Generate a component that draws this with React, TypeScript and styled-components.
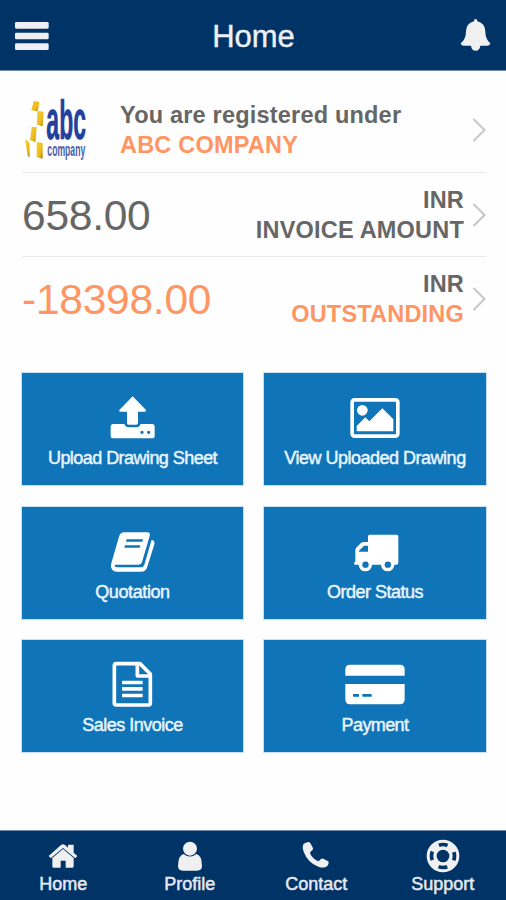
import React from "react";
import styled, { createGlobalStyle } from "styled-components";

const NAVY = "#003366";
const BLUE = "#1074b9";
const ORANGE = "#ff9562";
const GREY = "#666666";

const GlobalStyle = createGlobalStyle`
  * { box-sizing: border-box; }
  body {
    margin: 0;
    background: #fefefe;
    font-family: "Liberation Sans", Arial, sans-serif;
  }
`;

const Screen = styled.div`
  width: 506px;
  height: 900px;
  display: flex;
  flex-direction: column;
  overflow: hidden;
`;

const Header = styled.header`
  height: 71px;
  flex: none;
  display: grid;
  grid-template-columns: 64px 1fr 64px;
  align-items: center;
  background: ${NAVY};
  border-bottom: 1px solid #6f88a5;
`;

const HeaderIcon = styled.svg`
  width: 64px;
  height: 70px;
  display: block;
`;

const Title = styled.h1`
  margin: 4px 0 0 1px;
  text-align: center;
  font-size: 31px;
  line-height: 36px;
  font-weight: 400;
  color: #eef0f8;
  -webkit-text-stroke: 0.4px #eef0f8;
`;

const Main = styled.main`
  flex: 1;
  padding: 17px 20px 0 22px;
`;

const InfoRow = styled.section<{ $last?: boolean }>`
  height: ${(p) => (p.$last ? 82 : 84.5)}px;
  display: flex;
  align-items: center;
  border-bottom: ${(p) => (p.$last ? "0" : "1px solid #e9e9e9")};
`;

const Logo = styled.svg`
  width: 70px;
  height: 68px;
  margin-right: 28px;
  flex: none;
  overflow: visible;
`;

const Lines = styled.div<{ $end?: boolean }>`
  flex: 1;
  padding-top: ${(p) => (p.$end ? 1 : 0)}px;
  text-align: ${(p) => (p.$end ? "right" : "left")};
  font-weight: 700;
  font-size: 23.5px;
  line-height: 30px;
  letter-spacing: 0.2px;
  white-space: nowrap;
`;

const Line = styled.div<{ $accent?: boolean }>`
  color: ${(p) => (p.$accent ? ORANGE : GREY)};
`;

const Amount = styled.div<{ $accent?: boolean }>`
  padding-top: 3px;
  font-size: 42.5px;
  line-height: 48px;
  letter-spacing: -0.25px;
  color: ${(p) => (p.$accent ? ORANGE : GREY)};
`;

const ChevronSvg = styled.svg`
  width: 14px;
  height: 26px;
  margin: 1px 0 0 8px;
  flex: none;
`;

const Tiles = styled.nav`
  margin-top: 34px;
  display: grid;
  grid-template-columns: 221px 222px;
  grid-auto-rows: 112px;
  column-gap: 21px;
  row-gap: 21.5px;
`;

const Tile = styled.a`
  display: flex;
  flex-direction: column;
  align-items: center;
  padding-top: 20px;
  background: ${BLUE};
  box-shadow: 0 0 0 1px #c6e0f2;
`;

const TileIcon = styled.svg`
  width: 68px;
  height: 48px;
  flex: none;
  fill: #fff;
`;

const TileLabel = styled.span<{ $spacing?: number }>`
  margin-top: 7px;
  font-size: 18px;
  line-height: 20px;
  letter-spacing: ${(p) => p.$spacing ?? -0.5}px;
  color: #e9f6ff;
  -webkit-text-stroke: 0.45px #e9f6ff;
  white-space: nowrap;
`;

const Footer = styled.footer`
  height: 70px;
  flex: none;
  display: grid;
  grid-template-columns: repeat(4, 1fr);
  background: ${NAVY};
  border-top: 1px solid #6f88a5;
`;

const Tab = styled.a`
  display: flex;
  flex-direction: column;
  align-items: center;
  padding-top: 7px;
  font-size: 18px;
  line-height: 21px;
  color: #e6e8f2;
  -webkit-text-stroke: 0.5px #e6e8f2;
`;

const TabIcon = styled.svg`
  width: 40px;
  height: 36px;
  flex: none;
  fill: #f0f0f1;
`;

const Chevron = () => (
  <ChevronSvg viewBox="0 0 14 26">
    <path d="M1.5 2L12.5 13L1.5 24" fill="none" stroke="#c6c6c6" strokeWidth="2" />
  </ChevronSvg>
);

const CompanyLogo = () => (
  <Logo viewBox="36 36 210 204">
    <defs>
      <linearGradient id="gold" x1="0" y1="0" x2="1" y2="1">
        <stop offset="0" stopColor="#f8d040" />
        <stop offset="0.65" stopColor="#ecb816" />
        <stop offset="1" stopColor="#a9780f" />
      </linearGradient>
    </defs>
    <g fill="url(#gold)">
      <path d="M71 50L88 54L83 82L64 79Z" />
      <path d="M82 80L101 83L98 127L81 122Z" />
      <path d="M65 128L80 130L76 174L60 168Z" />
      <path d="M45 164L58 176L59 220L53 215Z" />
      <path d="M80 174L98 177L98 224L80 219Z" />
    </g>
    <text
      transform="translate(109 165) scale(0.416 1)"
      fontFamily="Liberation Sans"
      fontWeight="700"
      fontSize="166"
      fill="#23409c"
      stroke="#23409c"
      strokeWidth="2"
    >
      abc
    </text>
    <text
      transform="translate(112 217) scale(0.463 1)"
      fontFamily="Liberation Sans"
      fontWeight="700"
      fontSize="56"
      fill="#4660aa"
    >
      company
    </text>
  </Logo>
);

const UploadIcon = () => (
  <TileIcon viewBox="267 84 204 144">
    <path d="M368 94L408 135Q409 140 404 140H384V175Q384 179 379 179H356Q351 179 351 175V140H331Q326 140 328 135Z" />
    <path
      fillRule="evenodd"
      d="M310 177H343Q347 187 356 187H379Q388 187 392 177H426Q434 177 434 185V212Q434 220 426 220H310Q302 220 302 212V185Q302 177 310 177ZM391 202a5 5 0 1 0 10 0a5 5 0 1 0-10 0ZM411 202a5 5 0 1 0 10 0a5 5 0 1 0-10 0Z"
    />
  </TileIcon>
);

const PictureIcon = () => (
  <TileIcon viewBox="258 84 204 144">
    <rect x="291.5" y="104.5" width="137" height="109" rx="7" fill="none" stroke="#fff" strokeWidth="11" />
    <circle cx="322" cy="136" r="16" />
    <path d="M305 199V183L331 157L343 169L382 130L415 163V199Z" />
  </TileIcon>
);

const BookIcon = () => (
  <TileIcon viewBox="267 81 204 144">
    <path
      fillRule="evenodd"
      d="M340 97H412Q422 98 419 108L396 187Q394 194 386 194H318Q313 194 314 198Q316 202 323 202H392Q400 202 403 194L425 119Q436 123 433 133L411 203Q406 215 394 215H322Q306 215 303 200Q302 194 305 186L327 110Q331 98 340 97ZM350 118L348 125H397L399 118ZM345 136L343 143H389L391 136Z"
    />
  </TileIcon>
);

const TruckIcon = () => (
  <TileIcon viewBox="258 81 204 144">
    <path
      fillRule="evenodd"
      d="M344 104H425Q430 104 430 109V188Q430 194 424 194H418A20 20 0 0 1 378 194H351A20 20 0 0 1 311 194H301Q296 194 297 188Q301 188 301 182V151Q301 146 305 142L317 130Q321 126 327 126H339V109Q339 104 344 104ZM339 137H327L312 152V155H339ZM322 194a9.5 9.5 0 1 0 19 0a9.5 9.5 0 1 0-19 0ZM389 194a9.5 9.5 0 1 0 19 0a9.5 9.5 0 1 0-19 0Z"
    />
  </TileIcon>
);

const InvoiceIcon = () => (
  <TileIcon viewBox="267 81 204 144">
    <g fill="none" stroke="#fff" strokeWidth="11" strokeLinejoin="round">
      <path d="M319 92H390L421 123V210Q421 216 415 216H319Q313 216 313 210V98Q313 92 319 92Z" />
      <path d="M382 92V129H421" />
    </g>
    <rect x="336" y="143" width="62" height="11" rx="2" />
    <rect x="336" y="162" width="62" height="11" rx="2" />
    <rect x="336" y="182" width="62" height="11" rx="2" />
  </TileIcon>
);

const CardIcon = () => (
  <TileIcon viewBox="258 81 204 144">
    <path d="M285 95H435Q449 95 449 109V128H271V109Q271 95 285 95Z" />
    <path
      fillRule="evenodd"
      d="M271 153H449V199Q449 214 435 214H285Q271 214 271 199ZM294 183V191H312V183ZM322 183V191H350V183Z"
    />
  </TileIcon>
);

const HomeIcon = () => (
  <TabIcon viewBox="131 53 120 108">
    <path d="M185 74Q191 69 197 74L206 82V73H223V97L234 107L228 114L191 83L154 114L148 107Z" />
    <path d="M191 86L223 113V138Q223 142 219 142H199V121H184V142H163Q159 142 159 138V113Z" />
  </TabIcon>
);

const ProfileIcon = () => (
  <TabIcon viewBox="511 53 120 108">
    <circle cx="571" cy="85" r="21" />
    <path d="M552 101Q571 116 590 101Q606 104 607 137Q607 151 592 151H550Q535 151 535 137Q536 104 552 101Z" />
  </TabIcon>
);

const PhoneIcon = () => (
  <TabIcon viewBox="891 53 120 108">
    <path d="M912 75Q914 67 929 65Q933 65 935 70L942 83Q944 87 937 92Q931 96 934 101Q942 116 956 122Q960 124 965 117Q969 113 973 115L986 122Q990 124 989 128Q986 139 978 141Q969 143 958 139Q927 128 914 94Q909 82 912 75Z" />
  </TabIcon>
);

const SupportIcon = () => (
  <TabIcon viewBox="1270 53 120 108">
    <circle cx="1330" cy="107" r="34" fill="none" stroke="#f0f0f1" strokeWidth="30" />
    <circle
      cx="1330"
      cy="107"
      r="34.5"
      fill="none"
      stroke={NAVY}
      strokeWidth="11"
      pathLength="360"
      strokeDasharray="44 46"
      strokeDashoffset="22"
    />
  </TabIcon>
);

const tiles = [
  { label: "Upload Drawing Sheet", Icon: UploadIcon, spacing: -0.55 },
  { label: "View Uploaded Drawing", Icon: PictureIcon, spacing: -0.5 },
  { label: "Quotation", Icon: BookIcon, spacing: -0.4 },
  { label: "Order Status", Icon: TruckIcon, spacing: -0.5 },
  { label: "Sales Invoice", Icon: InvoiceIcon, spacing: -0.5 },
  { label: "Payment", Icon: CardIcon, spacing: -0.6 },
];

const tabs = [
  { label: "Home", Icon: HomeIcon },
  { label: "Profile", Icon: ProfileIcon },
  { label: "Contact", Icon: PhoneIcon },
  { label: "Support", Icon: SupportIcon },
];

export default function App() {
  return (
    <Screen>
      <GlobalStyle />
      <Header>
        <HeaderIcon viewBox="0 0 192 210" fill="#eeeef4">
          <rect x="45" y="66" width="101" height="20" rx="4" />
          <rect x="45" y="98" width="101" height="20" rx="4" />
          <rect x="45" y="130" width="101" height="20" rx="4" />
        </HeaderIcon>
        <Title>Home</Title>
        <HeaderIcon viewBox="1326 0 192 210" fill="#f0f0f0">
          <path d="M1427 57Q1432 57 1432 64Q1454 69 1456 94Q1456 119 1471 130Q1470 137 1463 137H1441Q1439 152 1427 152Q1415 152 1413 137H1390Q1383 137 1382 130Q1398 119 1398 94Q1400 69 1422 64Q1422 57 1427 57Z" />
        </HeaderIcon>
      </Header>
      <Main>
        <InfoRow>
          <CompanyLogo />
          <Lines>
            <Line>You are registered under</Line>
            <Line $accent>ABC COMPANY</Line>
          </Lines>
          <Chevron />
        </InfoRow>
        <InfoRow>
          <Amount>658.00</Amount>
          <Lines $end>
            <Line>INR</Line>
            <Line>INVOICE AMOUNT</Line>
          </Lines>
          <Chevron />
        </InfoRow>
        <InfoRow $last>
          <Amount $accent>-18398.00</Amount>
          <Lines $end>
            <Line>INR</Line>
            <Line $accent>OUTSTANDING</Line>
          </Lines>
          <Chevron />
        </InfoRow>
        <Tiles>
          {tiles.map(({ label, Icon, spacing }) => (
            <Tile key={label}>
              <Icon />
              <TileLabel $spacing={spacing}>{label}</TileLabel>
            </Tile>
          ))}
        </Tiles>
      </Main>
      <Footer>
        {tabs.map(({ label, Icon }) => (
          <Tab key={label}>
            <Icon />
            <span>{label}</span>
          </Tab>
        ))}
      </Footer>
    </Screen>
  );
}
